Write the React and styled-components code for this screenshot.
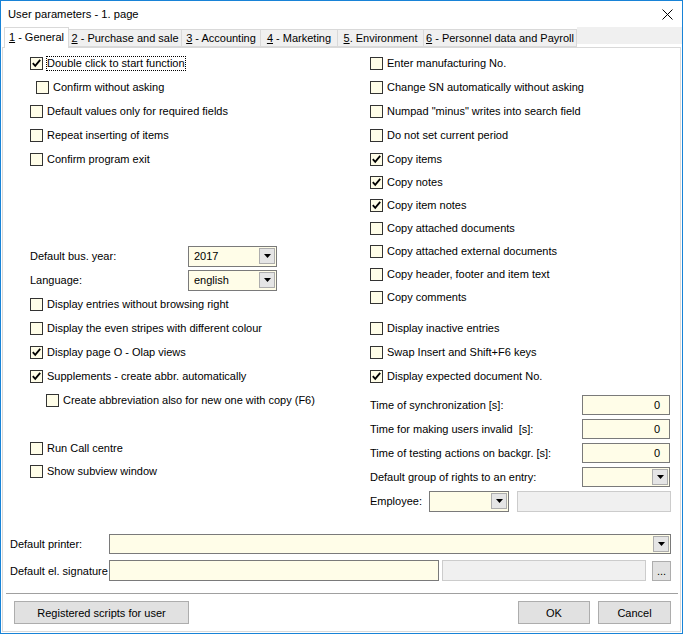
import React from 'react';
import styled, { createGlobalStyle } from 'styled-components';

const GlobalStyle = createGlobalStyle`
  html, body { margin: 0; padding: 0; background: #fff; }
  body {
    font-family: "Liberation Sans", Arial, sans-serif;
    font-size: 11px;
    color: #000;
  }
  * { box-sizing: border-box; }
`;

const Window = styled.div`
  width: 683px;
  height: 634px;
  border: 1px solid #1883d7;
  background: #fff;
  display: flex;
  flex-direction: column;
`;

const TitleBar = styled.div`
  height: 26px;
  flex: none;
  display: flex;
  align-items: center;
  justify-content: space-between;
  padding: 0 9px 0 7px;
  font-size: 11.2px;
`;

const TabStrip = styled.div`
  height: 20px;
  flex: none;
  display: flex;
  align-items: flex-end;
  padding-left: 3px;
  position: relative;
  z-index: 1;
`;

const Tab = styled.div`
  width: ${(p) => p.$w}px;
  height: ${(p) => (p.$active ? 21 : 18)}px;
  margin-bottom: ${(p) => (p.$active ? -1 : 0)}px;
  background: ${(p) => (p.$active ? '#fff' : '#f0f0f0')};
  border: 1px solid #d9d9d9;
  border-bottom: ${(p) => (p.$active ? 'none' : '1px solid #d9d9d9')};
  border-left: ${(p) => (p.$first || p.$active ? '1px solid #d9d9d9' : 'none')};
  display: flex;
  align-items: center;
  justify-content: center;
  white-space: pre;
  padding-bottom: ${(p) => (p.$active ? 2 : 0)}px;
`;

const TabFiller = styled.div`
  flex: 1;
  align-self: flex-start;
  height: 17px;
  background: #f0f0f0;
`;

const Panel = styled.div`
  flex: 1;
  margin: 0 1px 1px 1px;
  border: 1px solid #d9d9d9;
  background: #fff;
  display: flex;
  flex-direction: column;
`;

const Columns = styled.div`
  display: grid;
  grid-template-columns: 340px 1fr;
  padding: 3px 9px 0 27px;
`;

const Column = styled.div`
  display: flex;
  flex-direction: column;
`;

const Row = styled.div`
  display: flex;
  align-items: center;
  height: ${(p) => p.$h || 24}px;
  margin-top: ${(p) => p.$mt || 0}px;
  padding-left: ${(p) => p.$indent || 0}px;
  white-space: nowrap;
`;

const Box = styled.span`
  width: 13px;
  height: 13px;
  flex: none;
  border: 1px solid #333;
  background: #fffde8;
  display: flex;
  align-items: center;
  justify-content: center;
`;

const Caption = styled.span`
  margin-left: 4px;
  line-height: 13px;
  ${(p) => p.$focus && 'outline: 1px dotted #000; outline-offset: 0;'}
`;

const Label = styled.span`
  width: ${(p) => (p.$w ? `${p.$w}px` : 'auto')};
  flex: none;
`;

const Combo = styled.div`
  width: ${(p) => (p.$w ? `${p.$w}px` : 'auto')};
  flex: ${(p) => (p.$w ? 'none' : '1')};
  height: ${(p) => p.$h || 20}px;
  border: 1px solid #7a7a7a;
  background: #fffde8;
  display: flex;
  align-items: center;
  justify-content: space-between;
  padding: 0 1px 0 5px;
`;

const DropBtn = styled.span`
  width: 16px;
  height: ${(p) => p.$h || 16}px;
  background: #e5e5e5;
  border: 1px solid #adadad;
  display: flex;
  align-items: center;
  justify-content: center;
`;

const Field = styled.div`
  width: ${(p) => (p.$w ? `${p.$w}px` : 'auto')};
  flex: ${(p) => (p.$w ? 'none' : '1')};
  height: ${(p) => p.$h || 20}px;
  border: 1px solid ${(p) => (p.$disabled ? '#cccccc' : '#7a7a7a')};
  background: ${(p) => (p.$disabled ? '#f0f0f0' : '#fffde8')};
  margin-left: ${(p) => p.$ml || 0}px;
  display: flex;
  align-items: center;
  justify-content: flex-end;
  padding-right: 9px;
`;

const Bottom = styled.div`
  margin-top: auto;
  display: flex;
  flex-direction: column;
`;

const FieldRow = styled.div`
  display: flex;
  align-items: center;
  height: ${(p) => p.$h}px;
  margin-top: ${(p) => p.$mt || 0}px;
  padding: 0 9px 0 7px;
`;

const Separator = styled.div`
  height: 1px;
  background: #a0a0a0;
  margin: 12px 2px 0 3px;
`;

const ButtonRow = styled.div`
  display: flex;
  align-items: center;
  padding: 0 9px 0 11px;
  margin: 7px 0 7px;
  gap: 8px;
`;

const Button = styled.button`
  width: ${(p) => p.$w}px;
  height: ${(p) => p.$h || 23}px;
  background: #e1e1e1;
  border: 1px solid #adadad;
  font: inherit;
  color: #000;
  padding: 0;
  margin-left: ${(p) => p.$ml || 0}px;
  margin-right: ${(p) => (p.$push ? 'auto' : '0')};
`;

const Arrow = () => (
  <svg width="7" height="4" viewBox="0 0 7 4">
    <polygon points="0,0 7,0 3.5,4" fill="#000" />
  </svg>
);

const Tick = () => (
  <svg width="11" height="11" viewBox="0 0 11 11">
    <path d="M1.8 5.2 L4.2 7.8 L9.2 1.8" fill="none" stroke="#000" strokeWidth="1.8" />
  </svg>
);

function Check({ checked, focus, children }) {
  return (
    <>
      <Box>{checked && <Tick />}</Box>
      <Caption $focus={focus}>{children}</Caption>
    </>
  );
}

function Select({ w, h, value, btnH }) {
  return (
    <Combo $w={w} $h={h}>
      <span>{value}</span>
      <DropBtn $h={btnH}>
        <Arrow />
      </DropBtn>
    </Combo>
  );
}

const tabs = [
  { key: '1', rest: ' - General', w: 65, active: true },
  { key: '2', rest: ' - Purchase and sale', w: 113 },
  { key: '3', rest: ' - Accounting', w: 79 },
  { key: '4', rest: ' - Marketing', w: 77 },
  { key: '5', rest: '. Environment', w: 86 },
  { key: '6', rest: ' - Personnel data and Payroll', w: 153 },
];

export default function App() {
  return (
    <>
      <GlobalStyle />
      <Window>
        <TitleBar>
          <span>User parameters - 1. page</span>
          <svg width="11" height="11" viewBox="0 0 11 11">
            <path d="M0.5 0.5 L10.5 10.5 M10.5 0.5 L0.5 10.5" stroke="#000" strokeWidth="1" />
          </svg>
        </TitleBar>

        <TabStrip>
          {tabs.map((t, i) => (
            <Tab key={t.key} $w={t.w} $active={t.active} $first={i === 0}>
              <span>
                <u>{t.key}</u>
                {t.rest}
              </span>
            </Tab>
          ))}
          <TabFiller />
        </TabStrip>

        <Panel>
          <Columns>
            <Column>
              <Row><Check checked focus>Double click to start function</Check></Row>
              <Row $indent={6}><Check>Confirm without asking</Check></Row>
              <Row><Check>Default values only for required fields</Check></Row>
              <Row><Check>Repeat inserting of items</Check></Row>
              <Row><Check>Confirm program exit</Check></Row>

              <Row $mt={73}>
                <Label $w={158}>Default bus. year:</Label>
                <Select w={89} h={21} value="2017" />
              </Row>
              <Row>
                <Label $w={158}>Language:</Label>
                <Select w={89} h={21} value="english" />
              </Row>
              <Row><Check>Display entries without browsing right</Check></Row>
              <Row><Check>Display the even stripes with different colour</Check></Row>
              <Row><Check checked>Display page O - Olap views</Check></Row>
              <Row><Check checked>Supplements - create abbr. automatically</Check></Row>
              <Row $indent={16}><Check>Create abbreviation also for new one with copy (F6)</Check></Row>

              <Row $mt={24}><Check>Run Call centre</Check></Row>
              <Row $h={22}><Check>Show subview window</Check></Row>
            </Column>

            <Column>
              <Row><Check>Enter manufacturing No.</Check></Row>
              <Row><Check>Change SN automatically without asking</Check></Row>
              <Row><Check>Numpad "minus" writes into search field</Check></Row>
              <Row><Check>Do not set current period</Check></Row>
              <Row><Check checked>Copy items</Check></Row>
              <Row $h={23}><Check checked>Copy notes</Check></Row>
              <Row $h={23}><Check checked>Copy item notes</Check></Row>
              <Row $h={23}><Check>Copy attached documents</Check></Row>
              <Row $h={23}><Check>Copy attached external documents</Check></Row>
              <Row $h={23}><Check>Copy header, footer and item text</Check></Row>
              <Row $h={23}><Check>Copy comments</Check></Row>

              <Row $mt={7}><Check>Display inactive entries</Check></Row>
              <Row><Check>Swap Insert and Shift+F6 keys</Check></Row>
              <Row><Check checked>Display expected document No.</Check></Row>

              <Row $mt={5}>
                <Label $w={212}>Time of synchronization [s]:</Label>
                <Field $w={88}>0</Field>
              </Row>
              <Row>
                <Label $w={212}>Time for making users invalid&nbsp; [s]:</Label>
                <Field $w={88}>0</Field>
              </Row>
              <Row>
                <Label $w={212}>Time of testing actions on backgr. [s]:</Label>
                <Field $w={88}>0</Field>
              </Row>
              <Row>
                <Label $w={212}>Default group of rights to an entry:</Label>
                <Select w={88} h={20} value="" />
              </Row>
              <Row>
                <Label $w={59}>Employee:</Label>
                <Select w={80} h={21} value="" />
                <Field $disabled $h={21} $ml={8} />
              </Row>
            </Column>
          </Columns>

          <Bottom>
            <FieldRow $h={20}>
              <Label $w={99}>Default printer:</Label>
              <Select h={20} value="" />
            </FieldRow>
            <FieldRow $h={21} $mt={6}>
              <Label $w={99}>Default el. signature</Label>
              <Field $w={330} $h={21} />
              <Field $disabled $h={21} $ml={3} />
              <Button $w={19} $h={20} $ml={6}>...</Button>
            </FieldRow>
            <Separator />
            <ButtonRow>
              <Button $w={175} $push>Registered scripts for user</Button>
              <Button $w={72}>OK</Button>
              <Button $w={73}>Cancel</Button>
            </ButtonRow>
          </Bottom>
        </Panel>
      </Window>
    </>
  );
}
